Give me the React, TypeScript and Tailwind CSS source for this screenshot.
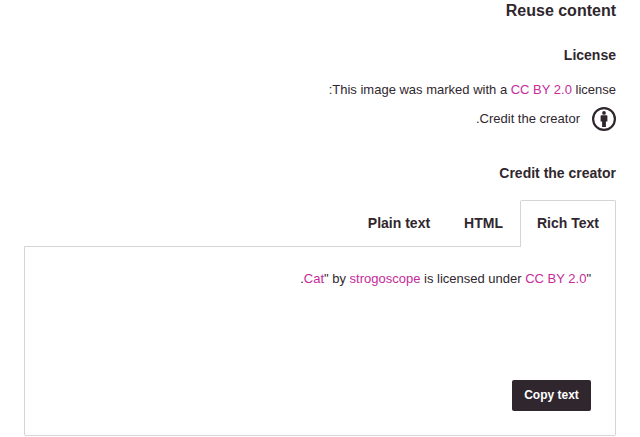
export default function App() {
  return (
    <main
      dir="rtl"
      className="h-[437px] w-[640px] overflow-hidden bg-white px-6 font-['Liberation_Sans',Arial,sans-serif] text-[13px] leading-[18px] text-[#30272e]"
    >
      <h2 className="h-[21px] text-base leading-[21px] font-bold">Reuse content</h2>
      <h3 className="mt-[25px] h-[18px] text-sm leading-[18px] font-bold">License</h3>
      <p className="mt-[17px] h-[18px]">
        This image was marked with a <a className="text-[#c52b9b]">CC BY 2.0</a> license:
      </p>
      <div className="mt-2 flex h-6 items-center gap-3">
        <svg viewBox="0 0 24 24" className="size-6" fill="#30272e">
          <circle cx="12" cy="12" r="10.9" fill="none" stroke="#30272e" strokeWidth="2.2" />
          <circle cx="12" cy="5.9" r="1.85" />
          <path d="M9.3 8.3h5.4q.7 0 .7.7v5.6h-1.5v5.5h-3.8v-5.5H8.6V9q0-.7.7-.7Z" />
        </svg>
        <p>Credit the creator.</p>
      </div>
      <h3 className="mt-[33px] h-[18px] text-sm leading-[18px] font-bold">Credit the creator</h3>
      <div className="mt-[18px] flex h-[47px] text-sm leading-[18px] font-bold" role="tablist">
        <button className="relative z-10 h-[47px] w-24 rounded-t-xs border border-b-0 border-[#d6d4d5] bg-white pb-0.5">Rich Text</button>
        <button className="h-[46px] pr-[17px] pl-4">HTML</button>
        <button className="h-[46px] px-[18px]">Plain text</button>
      </div>
      <section className="-mt-px flex h-[190px] flex-col justify-between rounded-b-xs border border-[#d6d4d5] p-6 pt-[23px]">
        <p>
          "<a className="text-[#c52b9b]">Cat</a>" by <a className="text-[#c52b9b]">strogoscope</a> is licensed under <a className="text-[#c52b9b]">CC BY 2.0</a>.
        </p>
        <button className="h-[31px] w-[79px] self-start rounded-xs bg-[#30272e] pb-0.5 text-xs font-bold text-white">Copy text</button>
      </section>
    </main>
  );
}
